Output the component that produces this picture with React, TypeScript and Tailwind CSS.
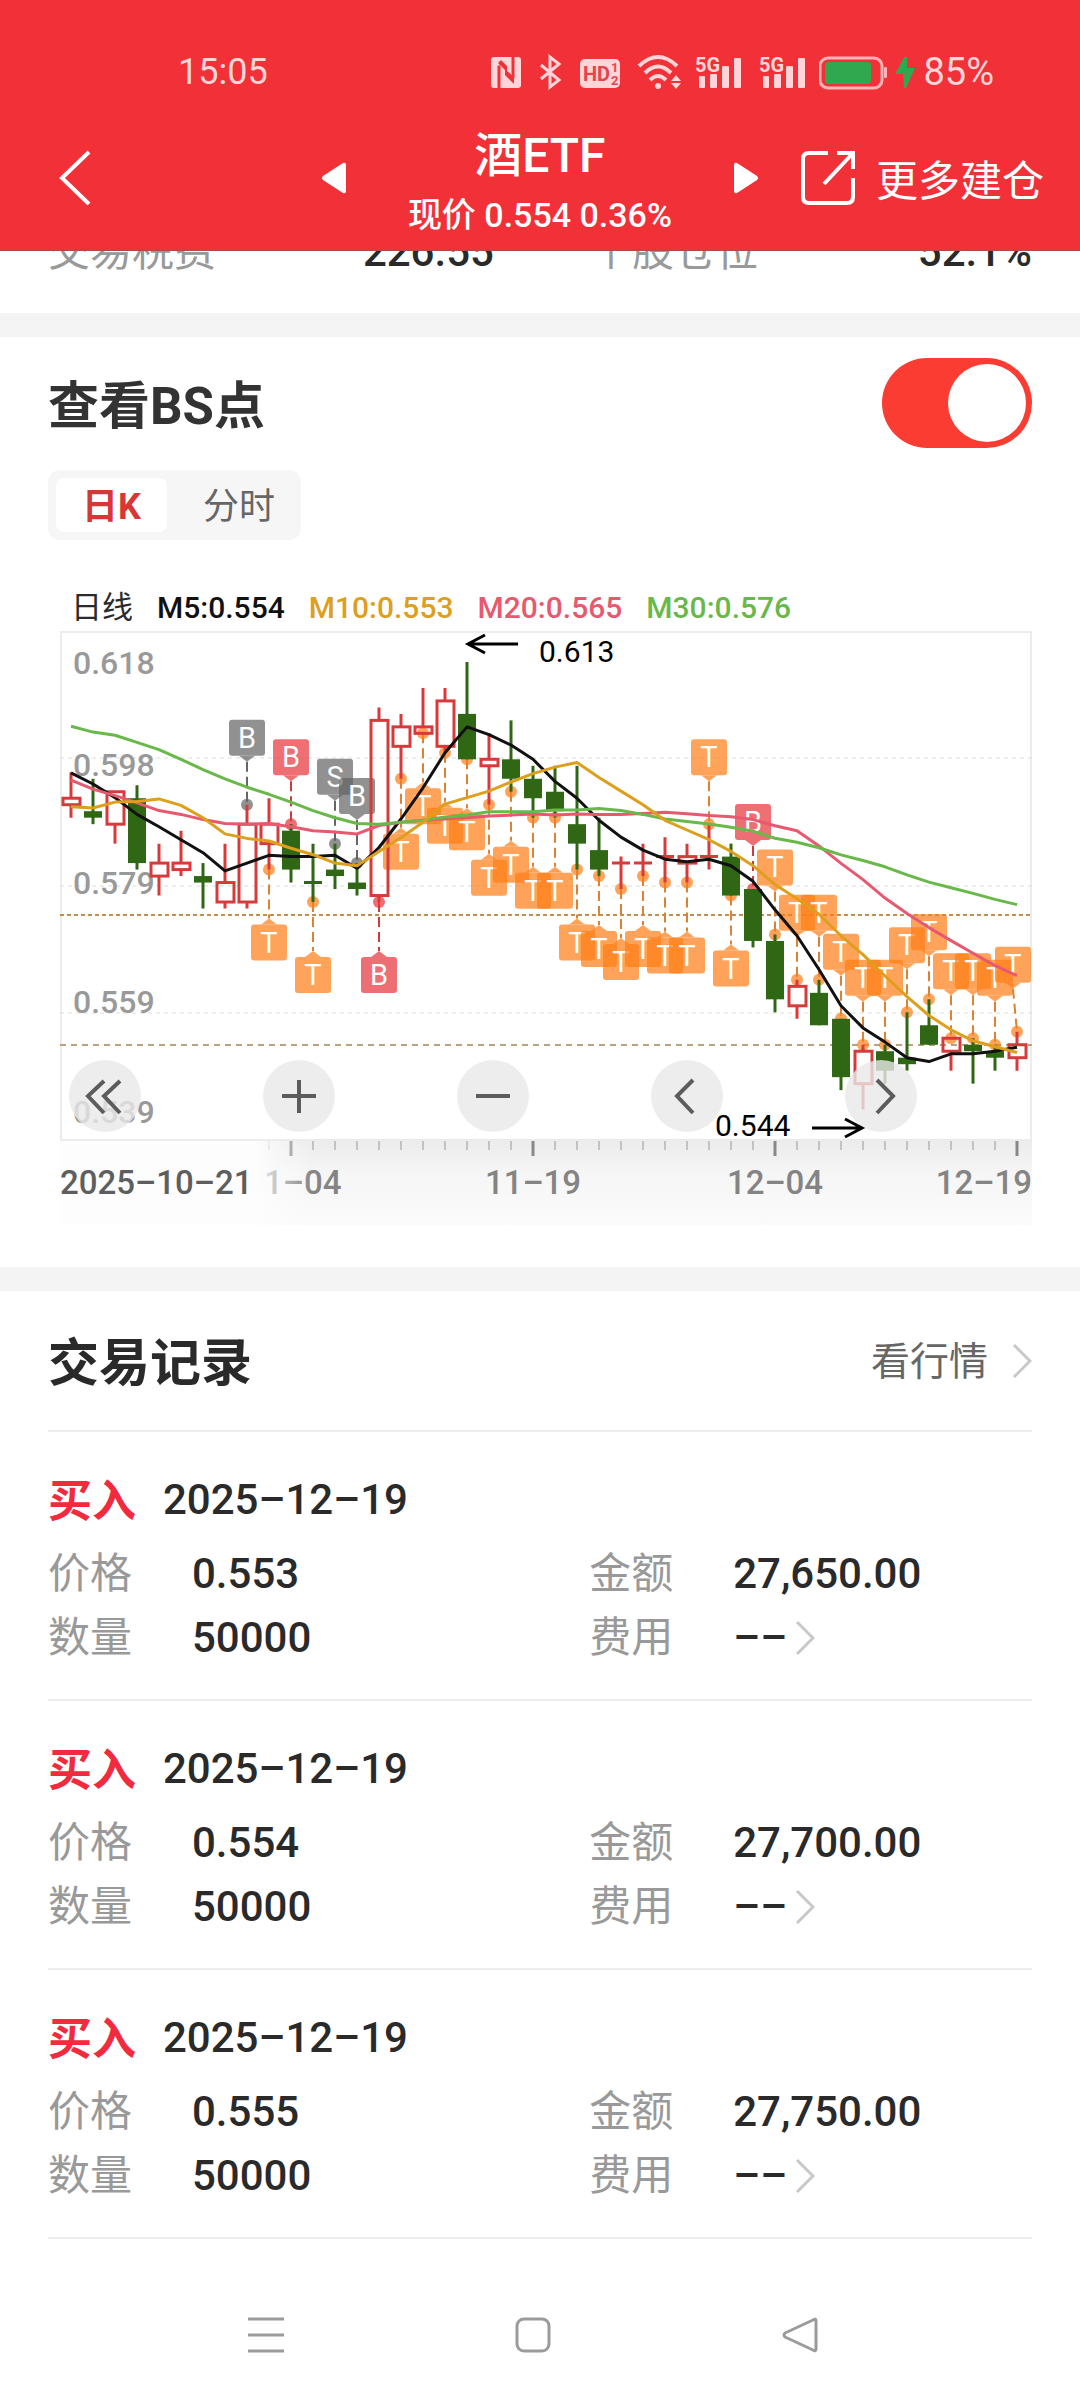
import { useState } from 'react';

type Candle = { o: number; h: number; l: number; c: number };
type Tone = 'gray' | 'red' | 'orange';
type Marker = { i: number; text: 'B' | 'S' | 'T'; tone: Tone; above: boolean };
type Trade = { id: number; side: string; date: string; price: string; amount: string; count: string };

// open, high, low, close in thousandths
const CANDLES: Candle[] = [
  [591, 596, 589, 592], [590, 595, 588, 589], [588, 593, 585, 593], [592, 594, 581, 582],
  [580, 585, 577, 582], [581, 587, 580, 582], [580, 582, 575, 579], [576, 585, 575, 579],
  [576, 591, 575, 588], [585, 592, 581, 588], [587, 588, 579, 581], [579, 585, 576, 579],
  [581, 585, 578, 580], [579, 582, 577, 578], [577, 606, 576, 604], [600, 605, 595, 603],
  [602, 609, 602, 603], [600, 609, 599, 607], [605, 613, 598, 598], [597, 602, 591, 598],
  [598, 604, 593, 595], [595, 597, 589, 592], [593, 597, 589, 590], [588, 597, 581, 585],
  [584, 589, 580, 581], [582, 583, 578, 582], [582, 585, 580, 582], [583, 586, 579, 583],
  [582, 585, 579, 583], [583, 588, 581, 583], [583, 585, 577, 577], [578, 578, 569, 570],
  [570, 571, 559, 561], [560, 564, 558, 563], [562, 564, 557, 557], [558, 558, 547, 549],
  [548, 554, 544, 553], [553, 554, 548, 550], [552, 559, 550, 551], [557, 561, 554, 554],
  [553, 555, 550, 555], [554, 555, 548, 553], [553, 554, 550, 552], [552, 556, 550, 554],
].map(([o, h, l, c]) => ({ o, h, l, c }));

// averages for the days whose window starts before the visible range
const SEED5 = [595.9, 594.2, 592.1, 589.5];
const SEED10 = [590.7, 590.5, 591.4, 591.5, 591.9, 590.9, 589, 586.5, 585.8];
const SEED20 = [
  594.8, 593.4, 592.4, 591.3, 590.1, 589.5, 588.7, 588.1, 588, 588.1,
  587.6, 587, 586.8, 586.5, 587.8, 588.3, 588.6, 588.8, 589,
];
const SEED30 = [
  603.1, 602.2, 601.7, 600.6, 599.5, 598, 596.4, 595, 593.7, 592.6,
  591.4, 590.1, 589, 588.1, 588, 588.3, 588.6, 589.1, 589.4, 589.9,
  589.9, 589.9, 590.2, 590.2, 590.4, 590.1, 589.5, 588.8, 588.4,
];

const T_BELOW = [9, 11, 15, 16, 17, 18, 19, 20, 21, 22, 23, 24, 25, 26, 27, 28, 30];
const T_ABOVE = [29, 32, 33, 34, 35, 36, 37, 38, 39, 40, 41, 42, 43];

const MARKERS: Marker[] = [
  { i: 8, text: 'B', tone: 'gray', above: true },
  { i: 10, text: 'B', tone: 'red', above: true },
  { i: 12, text: 'S', tone: 'gray', above: true },
  { i: 13, text: 'B', tone: 'gray', above: true },
  { i: 14, text: 'B', tone: 'red', above: false },
  { i: 31, text: 'B', tone: 'red', above: true },
  ...T_BELOW.map((i): Marker => ({ i, text: 'T', tone: 'orange', above: false })),
  ...T_ABOVE.map((i): Marker => ({ i, text: 'T', tone: 'orange', above: true })),
];

const TONES: Record<Tone, string> = { gray: '#636363', red: '#e83339', orange: '#ff7d15' };
const DASH_TONES: Record<Tone, string> = { gray: '#666666', red: '#cf3a3a', orange: '#dd8136' };

const TRADES: Trade[] = [
  { id: 1, side: '买入', date: '2025-12-19', price: '0.553', amount: '27,650.00', count: '50000' },
  { id: 2, side: '买入', date: '2025-12-19', price: '0.554', amount: '27,700.00', count: '50000' },
  { id: 3, side: '买入', date: '2025-12-19', price: '0.555', amount: '27,750.00', count: '50000' },
];

const PRICE_LABELS = [
  { text: '0.618', y: 43 },
  { text: '0.598', y: 145 },
  { text: '0.579', y: 263 },
  { text: '0.559', y: 382 },
  { text: '0.539', y: 492 },
];

const CHART_W = 972;
const CHART_H = 594;
const RED = '#d63b3b';
const GREEN = '#2f6714';

const xOf = (i: number) => 11 + i * 22;
const yOf = (p: number) => 31 + (613 - p) * 6.487;

// dates are drawn with the wide dash
const wideDash = (s: string) => s.replaceAll('-', '–');

function average(size: number, seed: number[]) {
  return CANDLES.map((_, i) => {
    const value =
      i < seed.length ? seed[i] : CANDLES.slice(i - size + 1, i + 1).reduce((sum, k) => sum + k.c, 0) / size;
    return `${xOf(i)},${yOf(value).toFixed(1)}`;
  }).join(' ');
}

function SignalIcon() {
  return (
    <svg viewBox="0 -2 48 40" className="h-10 w-12" fill="currentColor">
      <text x="0" y="18" fontSize="20" fontWeight="700" fontFamily="Roboto, sans-serif">5G</text>
      <rect x="4" y="22" width="6" height="12" rx="1" />
      <rect x="15" y="20" width="7" height="14" rx="1" />
      <rect x="27" y="12" width="7" height="22" rx="1" />
      <rect x="39" y="4" width="7" height="30" rx="1" />
    </svg>
  );
}

function StatusBar() {
  return (
    <div className="flex items-center justify-between pt-12 pr-[86px] pl-[178px] text-[36px] leading-[48px] font-normal text-[#ffd5d7]">
      <span>15:05</span>
      <div className="flex items-center">
        <svg viewBox="0 0 30 36" className="mr-[18px] h-9 w-[30px]">
          <rect y="3" width="30" height="31" rx="3" fill="currentColor" />
          <path d="M8 34V11.500M22 3v21" stroke="#f13038" strokeWidth="3" />
          <path d="M7 9l7 7v5l9 9v-7l-7-6v-5l-6-6z" fill="#f13038" />
        </svg>
        <svg viewBox="0 0 24 36" className="mr-4 h-9 w-6" fill="none" stroke="currentColor" strokeWidth="3">
          <path d="M2 11l18 15-9 7V3l9 7L2 25" />
        </svg>
        <svg viewBox="0 0 42 36" className="mr-4 h-9 w-[42px]" fontFamily="Roboto, sans-serif" fontWeight="700">
          <rect x="1" y="5" width="40" height="29" rx="5" fill="currentColor" />
          <g fill="#e8434a">
            <text x="4" y="27" fontSize="20">HD</text>
            <text x="32" y="18" fontSize="13">1</text>
            <text x="32" y="31" fontSize="13">2</text>
          </g>
        </svg>
        <svg viewBox="0 0 46 36" className="mr-3 h-9 w-[46px]" fill="none" stroke="currentColor">
          <path d="M2 12Q21-6 40 12M8 19Q21 6 34 19M13 26Q21 18 29 26" strokeWidth="4" />
          <circle cx="21" cy="32" r="3" fill="currentColor" stroke="none" />
          <path d="M34 27l5-6 5 6zM34 29l5 6 5-6z" fill="currentColor" stroke="none" />
        </svg>
        <span className="mr-4 flex"><SignalIcon /></span>
        <span className="mr-3 flex"><SignalIcon /></span>
        <svg viewBox="0 0 68 36" className="mr-2 h-9 w-[68px]">
          <rect x="1" y="4" width="62" height="30" rx="8" fill="none" stroke="#ffb3b6" strokeWidth="3" />
          <rect x="65" y="13" width="3" height="11" rx="1" fill="#ffb3b6" />
          <rect x="6" y="8" width="46" height="22" rx="4" fill="#2fa84f" />
        </svg>
        <svg viewBox="0 0 20 36" className="mr-2 h-9 w-5" fill="#2fa84f">
          <path d="M9 3L0 20h8l1 14h2l9-20h-8V3z" />
        </svg>
        <span className="text-[38px]">85%</span>
      </div>
    </div>
  );
}

function Header() {
  return (
    <header className="border-b border-[#b5474b] bg-[#f13038] pb-[13px] font-medium text-white">
      <StatusBar />
      <div className="mt-[22px] flex h-[119px] items-center pr-9 pl-[58px]">
        <button type="button" aria-label="返回">
          <svg viewBox="0 0 34 56" className="h-14 w-[34px]" fill="none" stroke="currentColor" strokeWidth="4">
            <path d="M31 2L4 28l27 26" />
          </svg>
        </button>
        <button type="button" aria-label="上一个" className="ml-auto">
          <svg viewBox="0 0 24 32" className="h-8 w-6" fill="currentColor">
            <path d="M24 3v26q0 3-3 2L1 18q-2-2 0-4L21 1q3-1 3 2z" />
          </svg>
        </button>
        <div className="mx-[62px] pt-4 text-center whitespace-nowrap">
          <h1 className="text-[48px] leading-[60px]">酒ETF</h1>
          <p className="text-[34px] leading-[59px]">现价 0.554 0.36%</p>
        </div>
        <button type="button" aria-label="下一个">
          <svg viewBox="0 0 24 32" className="h-8 w-6" fill="currentColor">
            <path d="M0 3v26q0 3 3 2l20-13q2-2 0-4L3 1Q0 0 0 3z" />
          </svg>
        </button>
        <button type="button" className="ml-[42px] flex items-center gap-5 text-[42px] leading-[60px] font-normal whitespace-nowrap">
          <svg viewBox="0 0 56 56" className="h-14 w-14" fill="none" stroke="currentColor" strokeWidth="4">
            <path d="M28 3H9q-6 0-6 6v38q0 6 6 6h38q6 0 6-6V28M37 3h16v16M53 3L24 34" />
          </svg>
          <span className="pt-2">更多建仓</span>
        </button>
      </div>
    </header>
  );
}

function MarkerShape({ marker }: { marker: Marker }) {
  const { i, text, tone, above } = marker;
  const x = xOf(i);
  const cy = yOf(above ? CANDLES[i].h : CANDLES[i].l);
  // keep the last label inside the frame
  const lx = Math.min(x, CHART_W - 19);
  const top = above ? cy - 85 : cy + 55;
  return (
    <g>
      <path
        d={above ? `M${lx} ${top + 42}L${x} ${cy}` : `M${x} ${cy}V${top - 6}`}
        stroke={DASH_TONES[tone]}
        strokeWidth="2"
        strokeDasharray="10 5"
      />
      <g fill={TONES[tone]} opacity="0.7">
        <circle cx={x} cy={cy} r="6" />
        <rect x={lx - 18} y={top} width="36" height="36" rx="3" />
        <path d={above ? `M${lx - 8} ${top + 36}h16l-8 6z` : `M${lx - 8} ${top}h16l-8 -6z`} />
      </g>
      <text x={lx} y={top + 28} fontSize="29" textAnchor="middle" fill="#fff">{text}</text>
    </g>
  );
}

function CandleShape({ candle, x }: { candle: Candle; x: number }) {
  const { o, h, l, c } = candle;
  const top = yOf(Math.max(o, c));
  const bottom = yOf(Math.min(o, c));
  if (o === c) {
    const color = c === 579 ? GREEN : RED;
    return <path d={`M${x} ${yOf(h)}V${yOf(l)}M${x - 9} ${top}h18`} stroke={color} strokeWidth="3" />;
  }
  if (c > o) {
    return (
      <g stroke={RED} strokeWidth="3" fill="none">
        <path d={`M${x} ${yOf(h)}V${top}M${x} ${bottom}V${yOf(l)}`} />
        <rect x={x - 8} y={top} width="17" height={bottom - top} />
      </g>
    );
  }
  return (
    <g>
      <path d={`M${x} ${yOf(h)}V${yOf(l)}`} stroke={GREEN} strokeWidth="3" />
      <rect x={x - 9} y={top} width="18" height={bottom - top} fill={GREEN} />
    </g>
  );
}

function PriceChart() {
  return (
    <svg viewBox={`0 0 ${CHART_W} ${CHART_H}`} className="block w-full" fontFamily="Roboto, sans-serif">
      <defs>
        <linearGradient id="axisShade" x1="0" y1="0" x2="0" y2="1">
          <stop offset="0" stopColor="#ececec" />
          <stop offset="0.4" stopColor="#f6f6f6" />
          <stop offset="1" stopColor="#fbfbfb" />
        </linearGradient>
        <linearGradient id="axisFade">
          <stop offset="0" stopColor="#fdfdfd" />
          <stop offset="0.3" stopColor="#fdfdfd" stopOpacity="0.6" />
          <stop offset="1" stopColor="#fdfdfd" stopOpacity="0" />
        </linearGradient>
      </defs>

      {/* date axis */}
      <rect x="0" y="510" width={CHART_W} height="84" fill="url(#axisShade)" />
      {CANDLES.map((_, i) => {
        if (i < 9) return null;
        const major = (i - 10) % 11 === 0;
        return (
          <path key={i} d={`M${xOf(i)} 510v${major ? 15 : 9}`} stroke={major ? '#888' : '#999'} strokeWidth={major ? 3 : 1} />
        );
      })}
      {/* the first tick label slides under the start date, only its tail is left */}
      <g fontSize="33" fontWeight="500" fill="#848484" textAnchor="middle">
        <text x="204" y="563" textAnchor="start">{wideDash('1-04')}</text>
        <text x={xOf(21)} y="563">{wideDash('11-19')}</text>
        <text x={xOf(32)} y="563">{wideDash('12-04')}</text>
        <text x={CHART_W} y="563" textAnchor="end">{wideDash('12-19')}</text>
      </g>
      <rect x="0" y="510" width="196" height="84" fill="#fdfdfd" />
      <rect x="196" y="510" width="56" height="84" fill="url(#axisFade)" />
      <text x="0" y="563" fontSize="33" fontWeight="500" fill="#5e5e5e">{wideDash('2025-10-21')}</text>

      {/* frame and grid */}
      <rect x="1" y="1" width={CHART_W - 2} height="508" fill="#fff" stroke="#ececec" strokeWidth="2" />
      {[127, 255, 382].map((y) => (
        <path key={y} d={`M0 ${y}h${CHART_W}`} stroke="#dcdcdc" strokeDasharray="4 4" />
      ))}
      <path d={`M0 284h${CHART_W}`} stroke="#c48d4c" strokeWidth="2" strokeDasharray="4 3" />
      <path d={`M0 414h${CHART_W}`} stroke="#b7a47f" strokeWidth="2" strokeDasharray="6 5" />
      {PRICE_LABELS.map(({ text, y }) => (
        <text key={text} x="13" y={y} fontSize="32" fontWeight="500" fill="#999">{text}</text>
      ))}

      {MARKERS.map((marker) => (
        <MarkerShape key={marker.i} marker={marker} />
      ))}
      {CANDLES.map((candle, i) => (
        <CandleShape key={i} candle={candle} x={xOf(i)} />
      ))}
      <g fill="none" strokeWidth="3" strokeLinejoin="round">
        <polyline points={average(5, SEED5)} stroke="#111" />
        <polyline points={average(20, SEED20)} stroke="#e8596f" />
        <polyline points={average(30, SEED30)} stroke="#68b84a" />
        <polyline points={average(10, SEED10)} stroke="#dd9f1c" />
      </g>
    </svg>
  );
}

function Extremes() {
  return (
    <svg viewBox={`0 0 ${CHART_W} ${CHART_H}`} className="pointer-events-none absolute inset-0 w-full" fontFamily="Roboto, sans-serif" fontSize="30">
      <g fill="none" stroke="#000" strokeWidth="3">
        <path d="M458 13h-50M425 4l-17 9 17 9" />
        <path d="M752 497h50M785 488l17 9-17 9" />
      </g>
      <text x="479" y="31">0.613</text>
      <text x="655" y="505">0.544</text>
    </svg>
  );
}

function ChartButton({ label, d }: { label: string; d: string }) {
  return (
    <button type="button" aria-label={label} className="size-[72px] rounded-full bg-[#e8e8e8]/80">
      <svg viewBox="0 0 72 72" className="size-full" fill="none" stroke="#5c5c5c" strokeWidth="4">
        <path d={d} />
      </svg>
    </button>
  );
}

function Chevron() {
  return (
    <svg viewBox="0 0 20 36" className="h-9 w-5" fill="none" stroke="#c8c8c8" strokeWidth="3">
      <path d="M2 2l16 16L2 34" />
    </svg>
  );
}

function TradeRow({ trade }: { trade: Trade }) {
  return (
    <li className="border-b-2 border-[#ededed] pt-9 pb-[29px]">
      <div className="flex items-center gap-[27px] leading-[64px]">
        <span className="text-[44px] font-bold text-[#f22a3d]">{trade.side}</span>
        <span className="pb-1 text-[42px] font-medium">{wideDash(trade.date)}</span>
      </div>
      <dl className="mt-[6px] grid grid-cols-[55%_45%] text-[42px] leading-[64px] font-medium">
        <div className="flex">
          <dt className="w-36 font-normal text-[#999]">价格</dt>
          <dd>{trade.price}</dd>
        </div>
        <div className="flex">
          <dt className="w-36 font-normal text-[#999]">金额</dt>
          <dd>{trade.amount}</dd>
        </div>
        <div className="flex">
          <dt className="w-36 font-normal text-[#999]">数量</dt>
          <dd>{trade.count}</dd>
        </div>
        <div className="flex">
          <dt className="w-36 font-normal text-[#999]">费用</dt>
          <dd className="flex items-center gap-2">
            {wideDash('--')}
            <Chevron />
          </dd>
        </div>
      </dl>
    </li>
  );
}

export default function App() {
  const [showPoints, setShowPoints] = useState(true);
  const [tab, setTab] = useState<'day' | 'minute'>('day');

  const tabClass = (active: boolean) =>
    active ? 'rounded-lg bg-white px-[26px] font-bold text-[#d93636]' : 'pr-[18px] pl-9 text-[#666]';

  return (
    <div className="min-h-screen bg-white font-[Roboto,'Noto_Sans_CJK_SC',sans-serif] text-[#2a2a2a]">
      <Header />

      <div className="flex h-[62px] items-end overflow-hidden px-12 pb-[33px] text-[42px] leading-[56px] font-medium">
        <span className="w-[32%] font-normal text-[#999]">交易税费</span>
        <span>226.55</span>
        <span className="ml-24 font-normal text-[#999]">个股仓位</span>
        <span className="ml-auto">52.1%</span>
      </div>

      <section className="border-t-[24px] border-[#f4f4f4] pb-[42px]">
        <div className="flex items-center justify-between px-12 pt-[21px]">
          <label htmlFor="bs" className="pt-2 text-[51px] leading-[82px] font-bold text-[#333]">查看BS点</label>
          <input
            id="bs"
            type="checkbox"
            checked={showPoints}
            onChange={(e) => setShowPoints(e.target.checked)}
            className="h-[90px] w-[150px] appearance-none rounded-full bg-gray-300 p-[6px] before:block before:size-[78px] before:rounded-full before:bg-white before:content-[''] checked:bg-[#fb3c32] checked:pl-[66px]"
          />
        </div>

        <div className="mt-[22px] ml-12 flex w-fit rounded-xl bg-[#f6f6f6] p-2 text-[36px]">
          <button type="button" onClick={() => setTab('day')} className={tabClass(tab === 'day')}>
            <span className="block pt-1 leading-[50px]">日K</span>
          </button>
          <button type="button" onClick={() => setTab('minute')} className={tabClass(tab === 'minute')}>
            <span className="block pt-1 leading-[50px]">分时</span>
          </button>
        </div>

        <div className="pr-12 pl-[60px]">
          <div className="mt-[48px] flex gap-6 pb-[3px] pl-[11px] text-[30px] leading-[40px] font-medium">
            <span className="text-[31px] font-normal">日线</span>
            <span className="text-[#111]">M5:0.554</span>
            <span className="text-[#dd9f1c]">M10:0.553</span>
            <span className="text-[#e8596f]">M20:0.565</span>
            <span className="text-[#68b84a]">M30:0.576</span>
          </div>
          <div className="relative">
            <PriceChart />
            <div className="absolute bottom-[93px] left-[9px] flex gap-[122px]">
              <ChartButton label="最早" d="M35 21L19 36l16 17M51 21L35 36l16 17" />
              <ChartButton label="放大" d="M19 36h34M36 20v33" />
              <ChartButton label="缩小" d="M19 36h34" />
              <ChartButton label="向左" d="M42 20L26 36l16 17" />
              <ChartButton label="向右" d="M32 20l16 16-16 17" />
            </div>
            <Extremes />
          </div>
        </div>
      </section>

      <section className="border-t-[24px] border-[#f4f4f4] px-12">
        <div className="flex h-[141px] items-center justify-between border-b-2 border-[#ededed]">
          <h2 className="pt-2 text-[51px] font-bold">交易记录</h2>
          <a href="#quote" className="flex items-center gap-6 text-[39px] text-[#666]">
            <span className="pt-1">看行情</span>
            <Chevron />
          </a>
        </div>
        <ul>
          {TRADES.map((trade) => (
            <TradeRow key={trade.id} trade={trade} />
          ))}
        </ul>
      </section>

      <nav className="flex justify-between pt-[78px] pr-[262px] pb-12 pl-[248px] text-[#9b9b9b]">
        <button type="button" aria-label="最近任务">
          <svg viewBox="0 0 36 36" className="size-9" fill="none" stroke="currentColor" strokeWidth="3">
            <path d="M0 2h36M0 18h36M0 34h36" />
          </svg>
        </button>
        <button type="button" aria-label="主屏幕">
          <svg viewBox="0 0 36 36" className="size-9" fill="none" stroke="currentColor" strokeWidth="3">
            <rect x="2" y="2" width="32" height="32" rx="7" />
          </svg>
        </button>
        <button type="button" aria-label="后退">
          <svg viewBox="0 0 36 36" className="size-9" fill="none" stroke="currentColor" strokeWidth="3" strokeLinejoin="round">
            <path d="M34 4v28q0 3-3 1L3 20q-2-2 0-4L31 3q3-2 3 1z" />
          </svg>
        </button>
      </nav>
    </div>
  );
}
